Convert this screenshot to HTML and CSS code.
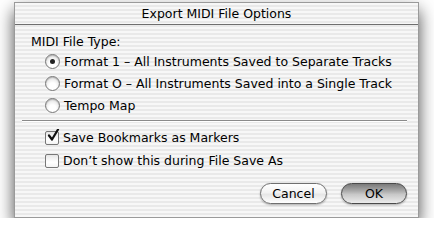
FILE: index.html
```html
<!DOCTYPE html>
<html>
<head>
<meta charset="utf-8">
<link rel="stylesheet" href="styles.css">
</head>
<body>
<div class="window">
  <div class="titlebar">Export MIDI File Options</div>
  <div class="content">
    <div class="group-label">MIDI File Type:</div>
    <div class="options">
      <div class="row"><span class="radio checked"></span><span>Format 1 – All Instruments Saved to Separate Tracks</span></div>
      <div class="row"><span class="radio"></span><span>Format O – All Instruments Saved into a Single Track</span></div>
      <div class="row"><span class="radio"></span><span>Tempo Map</span></div>
    </div>
    <div class="separator"></div>
    <div class="options checks">
      <div class="row"><span class="check checked"><svg viewBox="0 0 14 14" width="14" height="14"><path d="M3 6.5 L6 10.5 L12 0.5" fill="none" stroke="#111" stroke-width="2.2" stroke-linecap="round" stroke-linejoin="round"/></svg></span><span>Save Bookmarks as Markers</span></div>
      <div class="row"><span class="check"></span><span>Don’t show this during File Save As</span></div>
    </div>
    <div class="buttons">
      <div class="btn">Cancel</div>
      <div class="btn default">OK</div>
    </div>
  </div>
</div>
</body>
</html>
```
FILE: styles.css
```css
html, body {
  margin: 0;
  padding: 0;
  background: #fff;
}
body {
  padding: 2px 0 0 14px;
  font-family: "DejaVu Sans", "Liberation Sans", sans-serif;
  font-size: 12.5px;
  color: #000;
}
.window {
  width: 405px;
  height: 216px;
  box-sizing: border-box;
  border: 1px solid #9a9a9a;
  background: repeating-linear-gradient(to bottom, #f7f7f7 0px, #f7f7f7 2px, #e9e9e9 2px, #e9e9e9 4px);
  box-shadow: 0 8px 16px rgba(0,0,0,0.7);
  display: flex;
  flex-direction: column;
}
.titlebar {
  height: 21px;
  line-height: 21px;
  text-align: center;
  border-bottom: 1px solid #6e6e6e;
  flex: none;
}
.content {
  flex: 1;
  display: flex;
  flex-direction: column;
  padding: 7px 11px 13px 16px;
}
.group-label {
  line-height: 20px;
  margin-bottom: -2px;
}
.options {
  display: flex;
  flex-direction: column;
  padding-left: 14px;
}
.row {
  display: flex;
  align-items: center;
  height: 22px;
  gap: 4px;
}
.radio {
  width: 13px;
  height: 13px;
  border-radius: 50%;
  border: 1px solid #777;
  background: radial-gradient(circle at 50% 70%, #ffffff 30%, #e4e4e4 75%, #cfcfcf 100%);
  box-shadow: inset 0 1px 1px rgba(0,0,0,0.2);
  position: relative;
  flex: none;
}
.radio.checked::after {
  content: "";
  position: absolute;
  left: 4px;
  top: 4px;
  width: 5px;
  height: 5px;
  border-radius: 50%;
  background: #222;
}
.separator {
  height: 1px;
  background: #8a8a8a;
  margin: 4px 0 4px -9px;
  border-bottom: 1px solid #fff;
}
.checks .row {
  height: 23px;
}
.check {
  width: 12px;
  height: 12px;
  border: 1px solid #777;
  border-radius: 2px;
  background: linear-gradient(to bottom, #e6e6e6, #ffffff 60%, #f4f4f4);
  position: relative;
  flex: none;
}
.check svg {
  position: absolute;
  left: 0px;
  top: -3px;
}
.buttons {
  margin-top: auto;
  display: flex;
  justify-content: flex-end;
  gap: 14px;
}
.btn {
  width: 67px;
  height: 21px;
  box-sizing: border-box;
  border: 1px solid #6f6f6f;
  border-radius: 11px;
  text-align: center;
  line-height: 19px;
  background: linear-gradient(to bottom, #ffffff 0%, #f2f2f2 45%, #e6e6e6 55%, #ffffff 100%);
  box-shadow: 0 1px 2px rgba(0,0,0,0.3);
}
.btn.default {
  width: 66px;
  border-color: #4a4a4a;
  background: linear-gradient(to bottom, #7a7a7a 0%, #a8a8a8 35%, #c8c8c8 55%, #ececec 100%);
}
```
